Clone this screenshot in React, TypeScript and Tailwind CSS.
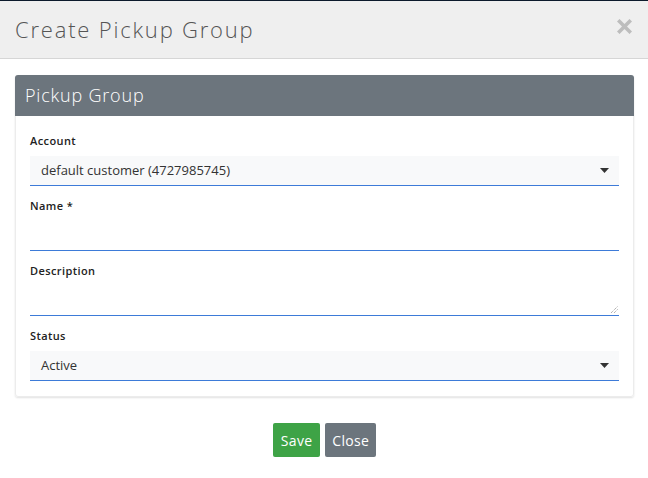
import React from 'react';

const Label: React.FC<{ text: string }> = ({ text }) => (
  <label className="block text-[11px] font-semibold text-[#222] leading-[14px] tracking-[0.4px] mb-[8px]">{text}</label>
);

const Caret = () => (
  <svg width="9" height="5" viewBox="0 0 9 5" className="text-[#333]">
    <path d="M0 0h9L4.5 5z" fill="currentColor" />
  </svg>
);

const SelectBox: React.FC<{ value: string }> = ({ value }) => (
  <div className="h-[30px] bg-[#f8f9fa] border-b border-[#3d7bd8] flex items-center justify-between pl-[11px] pr-[10px]">
    <span className="text-[13px] text-[#333]">{value}</span>
    <Caret />
  </div>
);

const App: React.FC = () => {
  return (
    <div className="w-[648px] h-[478px] bg-white border-t border-[#0c1a2c] font-['Open_Sans',sans-serif] overflow-hidden">
      {/* Header */}
      <div className="h-[58px] bg-[#efefef] border-b border-[#d6d6d6] flex items-center justify-between pl-[15px] pr-[16px]">
        <h1 className="text-[22px] font-light text-[#555] tracking-[1.8px]">Create Pickup Group</h1>
        <svg width="15" height="15" viewBox="0 0 15 15" className="-mt-[6px]">
          <path d="M2.5 2.5L12.5 12.5M12.5 2.5L2.5 12.5" stroke="#bdbdbd" strokeWidth="3.6" strokeLinecap="square" />
        </svg>
      </div>

      {/* Body */}
      <div className="pl-[15px] pr-[14px] pt-[16px]">
        <div className="rounded-[3px] border border-[#ececec] shadow-[0_1px_2px_rgba(0,0,0,0.12)]">
          <div className="h-[41px] bg-[#6c757d] rounded-t-[3px] flex items-center px-[10px] -mx-px -mt-px">
            <span className="text-[18px] font-light text-white tracking-[0.8px]">Pickup Group</span>
          </div>
          <div className="px-[14px] pt-[18px] pb-[15px]">
            <div className="mb-[13px]">
              <Label text="Account" />
              <SelectBox value="default customer (4727985745)" />
            </div>
            <div className="mb-[13px]">
              <Label text="Name *" />
              <div className="h-[30px] border-b border-[#3d7bd8]" />
            </div>
            <div className="mb-[13px]">
              <Label text="Description" />
              <div className="h-[30px] border-b border-[#3d7bd8] relative">
                <svg width="8" height="8" viewBox="0 0 8 8" className="absolute right-[1px] bottom-[2px]">
                  <path d="M1 8L8 1M4 8L8 4" stroke="#777" strokeWidth="0.8" strokeDasharray="1 1" />
                </svg>
              </div>
            </div>
            <div>
              <Label text="Status" />
              <SelectBox value="Active" />
            </div>
          </div>
        </div>

        {/* Footer */}
        <div className="flex justify-center gap-[5px] mt-[26px]">
          <button className="h-[34px] px-[8px] bg-[#3ea346] text-white text-[14px] tracking-[0.3px] rounded-[2px]">Save</button>
          <button className="h-[34px] px-[7px] bg-[#6c757d] text-white text-[14px] tracking-[0.3px] rounded-[2px]">Close</button>
        </div>
      </div>
    </div>
  );
};

export default App;
